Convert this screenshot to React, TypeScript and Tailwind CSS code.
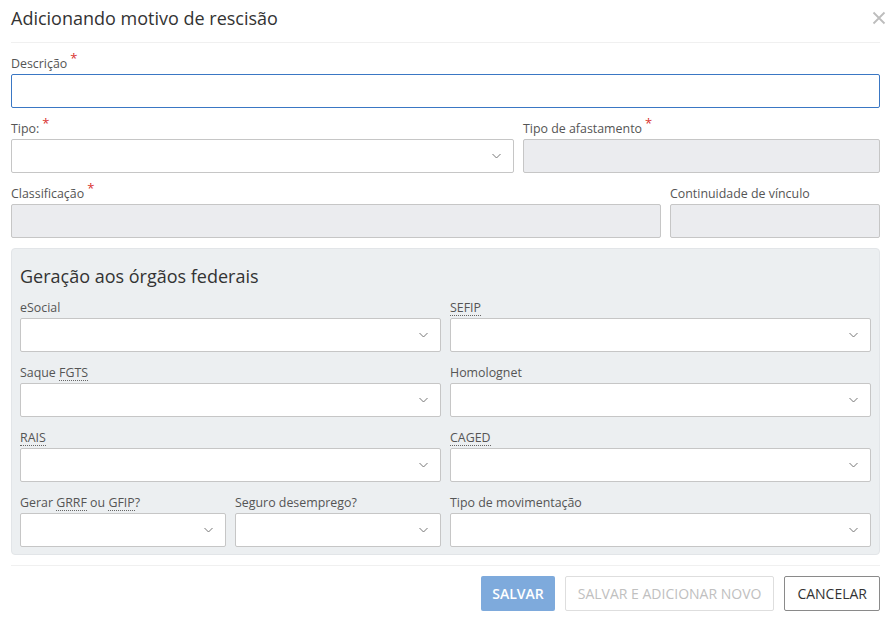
import React from 'react'

const Req = () => <span className="text-[#d9332f] text-[13px] align-top relative -top-[3px] ml-[3px] leading-none">*</span>

const Ab = ({ children }: { children: React.ReactNode }) => (
    <abbr className="no-underline border-b border-dotted border-[#666] leading-[15px] inline-block">{children}</abbr>
)

const Chevron = () => (
    <svg width="9" height="5" viewBox="0 0 9 5" className="absolute right-[12px] top-1/2 -translate-y-1/2">
        <polyline points="0.5,0.5 4.5,4.5 8.5,0.5" fill="none" stroke="#777" strokeWidth="1" />
    </svg>
)

const Label = ({ children }: { children: React.ReactNode }) => (
    <div className="h-[21px] pt-[2px] text-[12.4px] leading-[18px] text-[#555] whitespace-nowrap">{children}</div>
)

const Select = ({ label }: { label: React.ReactNode }) => (
    <div className="flex flex-col min-w-0">
        <Label>{label}</Label>
        <div className="relative h-[34px] bg-white border border-[#c6c6c6] rounded-[2px]">
            <Chevron />
        </div>
    </div>
)

const Disabled = ({ label }: { label: React.ReactNode }) => (
    <div className="flex flex-col min-w-0">
        <Label>{label}</Label>
        <div className="h-[34px] bg-[#ebecef] border border-[#c6c6c6] rounded-[2px]" />
    </div>
)

export default function App() {
    return (
        <div className="w-[891px] h-[617px] bg-white px-[11px] overflow-hidden" style={{ fontFamily: '"Open Sans", sans-serif' }}>
            <div className="h-[43px] flex items-start justify-between pt-[6px] border-b border-[#f0f0f0]">
                <h1 className="text-[18px] leading-[24px] text-[#333]">Adicionando motivo de rescisão</h1>
                <svg width="14" height="14" viewBox="0 0 14 14" className="mt-[5px] mr-[-6px]">
                    <path d="M1.5 1.5 L12.5 12.5 M12.5 1.5 L1.5 12.5" stroke="#bdbdbd" strokeWidth="1.8" />
                </svg>
            </div>

            <div className="flex flex-col gap-[10px] pt-[10px]">
                <div className="flex flex-col">
                    <Label>Descrição<Req /></Label>
                    <div className="h-[34px] border border-[#3a77c4] rounded-[2px]" />
                </div>

                <div className="grid grid-cols-[503px_1fr] gap-[9px]">
                    <Select label={<>Tipo:<Req /></>} />
                    <Disabled label={<>Tipo de afastamento<Req /></>} />
                </div>

                <div className="grid grid-cols-[650px_1fr] gap-[9px]">
                    <Disabled label={<>Classificação<Req /></>} />
                    <Disabled label="Continuidade de vínculo" />
                </div>

                <div className="bg-[#eceff1] border border-[#e2e5e8] rounded-[4px] px-[8px] pt-[15px] pb-[7px]">
                    <h2 className="text-[18px] leading-[24px] text-[#333] mb-[9px]">Geração aos órgãos federais</h2>
                    <div className="grid grid-cols-2 gap-x-[9px] gap-y-[10px]">
                        <Select label="eSocial" />
                        <Select label={<Ab>SEFIP</Ab>} />
                        <Select label={<>Saque <Ab>FGTS</Ab></>} />
                        <Select label="Homolognet" />
                        <Select label={<Ab>RAIS</Ab>} />
                        <Select label={<Ab>CAGED</Ab>} />
                        <div className="grid grid-cols-2 gap-[9px]">
                            <Select label={<>Gerar <Ab>GRRF</Ab> ou <Ab>GFIP</Ab>?</>} />
                            <Select label="Seguro desemprego?" />
                        </div>
                        <Select label="Tipo de movimentação" />
                    </div>
                </div>
            </div>

            <div className="mt-[10px] border-t border-[#f0f0f0] pt-[10px] flex justify-end gap-[10px]">
                <button className="h-[35px] px-[11px] rounded-[2px] bg-[#7eaadc] text-white text-[14px] font-semibold">SALVAR</button>
                <button className="h-[35px] px-[12px] rounded-[2px] border border-[#dedede] bg-white text-[#c0c0c0] text-[14px]">SALVAR E ADICIONAR NOVO</button>
                <button className="h-[35px] px-[12px] rounded-[2px] border border-[#8a8a8a] bg-white text-[#333] text-[14px]">CANCELAR</button>
            </div>
        </div>
    )
}
